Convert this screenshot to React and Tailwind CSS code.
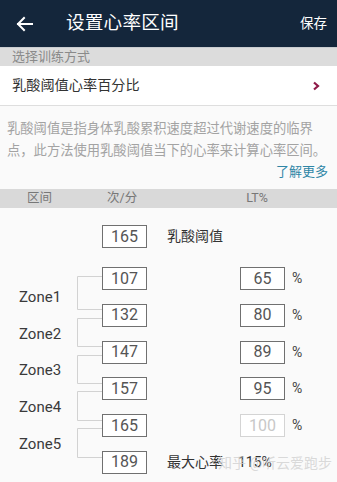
import { Fragment } from 'react';

const zones = ['Zone1', 'Zone2', 'Zone3', 'Zone4', 'Zone5'];

// box rows below the threshold row
const rows = [
  { bpm: 107, lt: 65 },
  { bpm: 132, lt: 80 },
  { bpm: 147, lt: 89 },
  { bpm: 157, lt: 95 },
  { bpm: 165, lt: 100, locked: true },
  { bpm: 189, max: '115%' },
];

const ROW_H = 36.8;
const BOX_MID = 11.5;

function NumBox({ value, muted }) {
  return (
    <div
      className={`w-[45px] h-[23px] flex items-center justify-center bg-white border text-[16px] leading-none ${
        muted ? 'border-[#d4d4d4] text-[#c8c8c8]' : 'border-[#707070] text-[#555]'
      }`}
    >
      {value}
    </div>
  );
}

function Brackets() {
  const lines = zones.map((_, k) => {
    const top = BOX_MID + k * ROW_H + (k === 0 ? -3 : 2.5);
    const bottom = BOX_MID + (k + 1) * ROW_H - 6;
    return { top: Math.round(top) + 0.5, bottom: Math.round(bottom) + 0.5 };
  });
  return (
    <svg className="absolute inset-0" width="102" height="222" fill="none" stroke="#d2d2d2" strokeWidth="1">
      {lines.map((l, i) => (
        <path key={i} d={`M102 ${l.top}H77.5V${l.bottom}H102`} />
      ))}
    </svg>
  );
}

export default function App() {
  return (
    <div
      className="w-[337px] h-[482px] overflow-hidden bg-[#fafafa] relative"
      style={{ fontFamily: 'Roboto, "Noto Sans CJK SC", sans-serif' }}
    >
      {/* Header */}
      <div className="h-[47px] bg-[#14263b] flex items-center text-white">
        <svg className="ml-[16px] w-[17px] h-[16px]" viewBox="0 0 17 16" fill="none" stroke="white" strokeWidth="2" strokeLinecap="square">
          <path d="M2 8h14M8 2L2 8l6 6" />
        </svg>
        <span className="ml-[33px] text-[18.6px] tracking-[0.2px]">设置心率区间</span>
        <span className="ml-auto mr-[10px] text-[13.5px]">保存</span>
      </div>

      {/* Section */}
      <div className="h-[19px] bg-[#dcdcdc] flex items-center px-[12px] text-[13px] text-[#8a8a8a] border-t border-[#c9ccd0]">
        选择训练方式
      </div>
      <div className="h-[40px] bg-white flex items-center px-[12px] border-b border-[#dedede]">
        <span className="text-[14.2px] text-[#333]">乳酸阈值心率百分比</span>
        <svg className="ml-auto mr-[4px] w-[10px] h-[10px]" viewBox="0 0 10 10" fill="none" stroke="#8e1a48" strokeWidth="2.2">
          <path d="M3 1.5L7 5L3 8.5" />
        </svg>
      </div>

      {/* Description */}
      <div className="pt-[12px] px-[7px] text-[13.3px] leading-[22px] text-[#a3a3a3]">
        乳酸阈值是指身体乳酸累积速度超过代谢速度的临界
        <br />
        点，此方法使用乳酸阈值当下的心率来计算心率区间。
      </div>
      <div className="flex justify-end pr-[9px] h-[27px] text-[13px] leading-[20px] text-[#2f86a6]">了解更多</div>

      {/* Table header */}
      <div className="h-[19px] bg-[#d9d9d9] flex items-center text-[12.5px] text-[#777]">
        <span className="ml-[27px] w-[80px]">区间</span>
        <span>次/分</span>
        <span className="ml-[109px]">LT%</span>
      </div>

      {/* Threshold row */}
      <div className="mt-[17px] h-[42px] flex items-start">
        <div className="w-[102px]" />
        <NumBox value={165} />
        <span className="ml-[20px] h-[23px] flex items-center text-[14px] text-[#333]">乳酸阈值</span>
      </div>

      {/* Zones */}
      <div className="flex">
        <div className="relative w-[102px]">
          <Brackets />
          <div className="relative pt-[11.6px] flex flex-col">
            {zones.map((z) => (
              <div key={z} className="h-[36.8px] flex items-center pl-[19px] text-[15px] text-[#3a3a3a]">
                {z}
              </div>
            ))}
          </div>
        </div>
        <div className="flex flex-col">
          {rows.map((r) => (
            <div key={r.bpm + '-' + (r.lt ?? 'max')} className="h-[36.8px] flex items-start">
              <NumBox value={r.bpm} />
              {r.max ? (
                <Fragment>
                  <span className="ml-[20px] h-[23px] flex items-center text-[14px] text-[#333]">最大心率</span>
                  <span className="ml-[15px] h-[23px] flex items-center text-[14px] text-[#333]">{r.max}</span>
                </Fragment>
              ) : (
                <Fragment>
                  <div className="ml-[93px]">
                    <NumBox value={r.lt} muted={r.locked} />
                  </div>
                  <span className="ml-[7px] h-[23px] flex items-center text-[14px] text-[#444]">%</span>
                </Fragment>
              )}
            </div>
          ))}
        </div>
      </div>

      {/* watermark */}
      <span className="absolute left-[218px] top-[453px] text-[14px] text-[#d0d0d0]/80 pointer-events-none">
        知乎 @听云爱跑步
      </span>
    </div>
  );
}
